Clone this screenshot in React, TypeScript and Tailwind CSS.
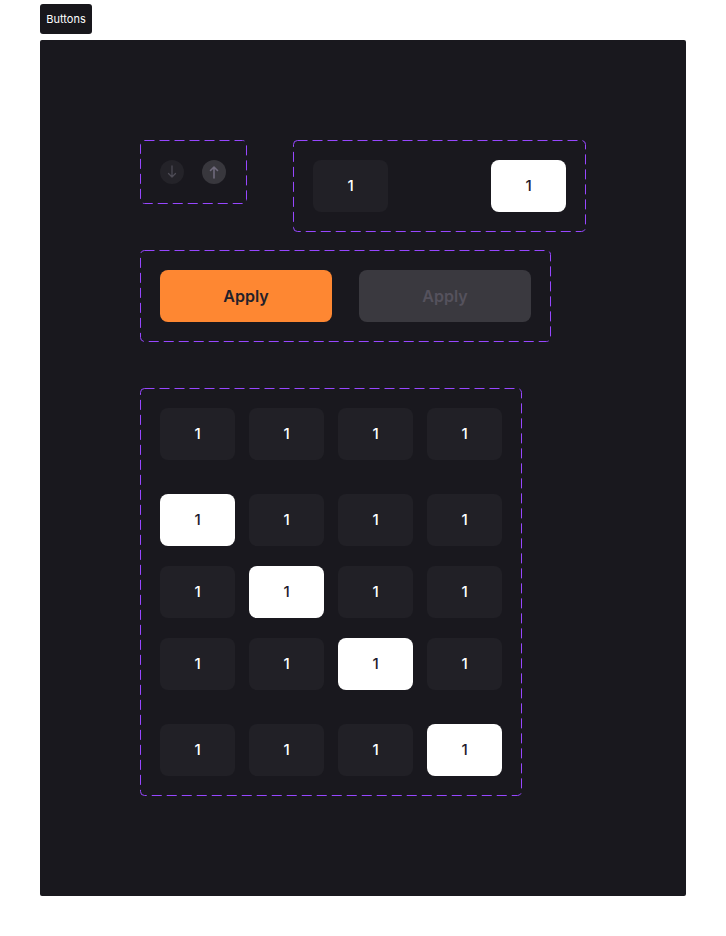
import React from 'react';

const DashedBox: React.FC<{ className?: string; children: React.ReactNode }> = ({ className = '', children }) => (
  <div className={`relative p-5 ${className}`}>
    <svg className="pointer-events-none absolute inset-0 h-full w-full overflow-visible">
      <rect
        x="0.5"
        y="0.5"
        rx="4"
        className="[width:calc(100%-1px)] [height:calc(100%-1px)]"
        fill="none"
        stroke="#9747FF"
        strokeWidth="1"
        strokeDasharray="10 5"
      />
    </svg>
    {children}
  </div>
);

const Key: React.FC<{ active?: boolean }> = ({ active }) => (
  <div
    className={`flex h-[52px] w-[75px] items-center justify-center rounded-lg text-[15px] font-medium ${
      active ? 'bg-white text-[#1e1a2c]' : 'bg-[#212026] text-white'
    }`}
  >
    1
  </div>
);

const ArrowDot: React.FC<{ dir: 'up' | 'down' }> = ({ dir }) => (
  <div
    className={`flex h-6 w-6 items-center justify-center rounded-full ${
      dir === 'down' ? 'bg-[#242329]' : 'bg-[#38373d]'
    }`}
  >
    <svg width="12" height="14" viewBox="0 0 12 14" fill="none">
      {dir === 'down' ? (
        <path d="M6 1v11M2.5 8.5 6 12l3.5-3.5" stroke="#4d4b55" strokeWidth="1.3" strokeLinecap="round" strokeLinejoin="round" />
      ) : (
        <path d="M6 13V2M2.5 5.5 6 2l3.5 3.5" stroke="#6f6a7c" strokeWidth="1.6" strokeLinecap="round" strokeLinejoin="round" />
      )}
    </svg>
  </div>
);

const rows: number[][] = [[-1], [0], [1], [2], [3]];

export default function App() {
  return (
    <div className="min-h-[936px] bg-white font-['Inter','Liberation_Sans',sans-serif]">
      <div className="px-10 pt-1">
        <div className="flex h-[30px] w-[52px] items-center justify-center rounded-[3px] bg-[#18171c] text-[11px] text-white">
          Buttons
        </div>
      </div>
      <div className="mx-10 mt-[6px] h-[856px] w-[646px] rounded-[2px] bg-[#19181e] pl-[100px] pt-[100px]">
        <div className="flex items-start gap-[46px]">
          <DashedBox className="w-[107px] h-[64px]">
            <div className="flex gap-[18px]">
              <ArrowDot dir="down" />
              <ArrowDot dir="up" />
            </div>
          </DashedBox>
          <DashedBox className="w-[293px]">
            <div className="flex justify-between">
              <Key />
              <Key active />
            </div>
          </DashedBox>
        </div>

        <DashedBox className="mt-[18px] w-[411px]">
          <div className="flex gap-[27px]">
            <button className="h-[52px] w-[172px] rounded-lg bg-[#fe8732] text-base font-semibold text-[#231f2a]">
              Apply
            </button>
            <button className="h-[52px] w-[172px] rounded-lg bg-[#3a393f] text-base font-semibold text-[#55525d]">
              Apply
            </button>
          </div>
        </DashedBox>

        <DashedBox className="mt-[46px] w-[382px]">
          <div className="flex flex-col">
            {rows.map((r, i) => (
              <div
                key={i}
                className={`flex gap-[14px] ${i === 1 || i === 4 ? 'mt-[34px]' : i === 0 ? '' : 'mt-5'}`}
              >
                {[0, 1, 2, 3].map((c) => (
                  <Key key={c} active={r[0] === c} />
                ))}
              </div>
            ))}
          </div>
        </DashedBox>
      </div>
    </div>
  );
}
